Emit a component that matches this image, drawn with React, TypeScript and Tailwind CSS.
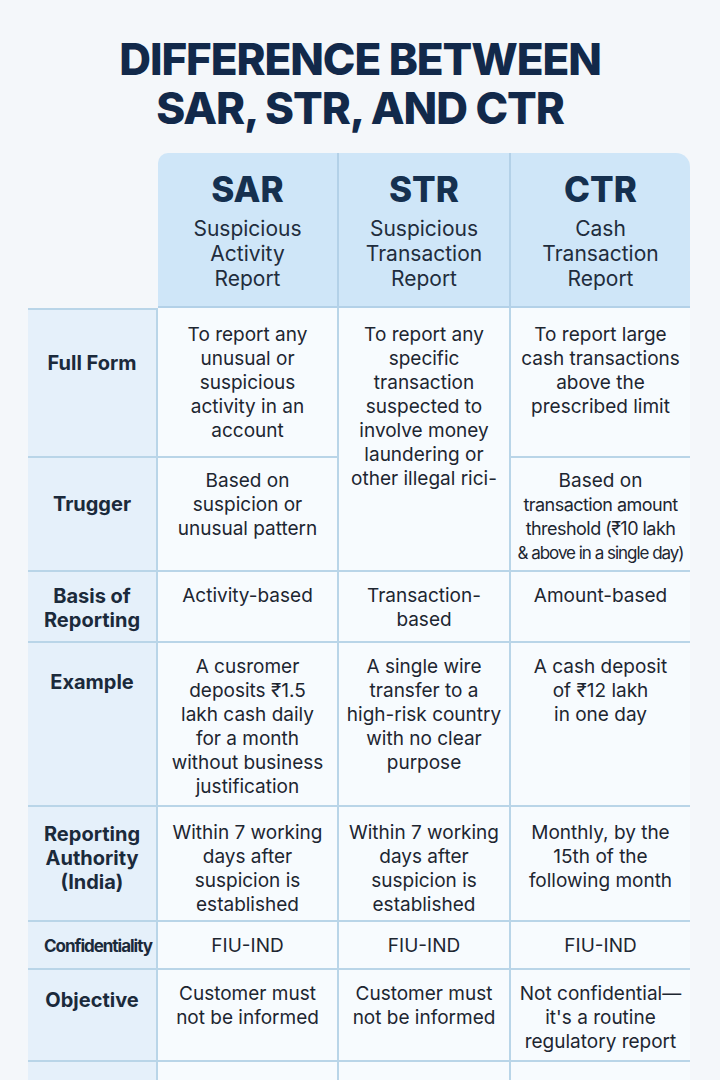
import React from "react"

type Row = {
  label: string[]
  labelPt: string
  pt: string
  sar: string[]
  str?: string[]
  ctr: React.ReactNode[]
}

const rows: Row[] = [
  {
    label: ["Full Form"],
    labelPt: "pt-[41px]",
    pt: "pt-[15px]",
    sar: ["To report any", "unusual or", "suspicious", "activity in an", "account"],
    str: [
      "To report any",
      "specific",
      "transaction",
      "suspected to",
      "involve money",
      "laundering or",
      "other illegal rici-",
    ],
    ctr: ["To report large", "cash transactions", "above the", "prescribed limit"],
  },
  {
    label: ["Trugger"],
    labelPt: "pt-[34px]",
    pt: "pt-[11px]",
    sar: ["Based on", "suspicion or", "unusual pattern"],
    ctr: [
      "Based on",
      <span className="text-[18px] tracking-[-0.03em]">transaction amount</span>,
      <span className="text-[18px] tracking-[-0.03em]">threshold (₹10 lakh</span>,
      <span className="text-[17px] tracking-[-0.06em]">&amp; above in a single day)</span>,
    ],
  },
  {
    label: ["Basis of", "Reporting"],
    labelPt: "pt-[12px]",
    pt: "pt-[12px]",
    sar: ["Activity-based"],
    str: ["Transaction-", "based"],
    ctr: ["Amount-based"],
  },
  {
    label: ["Example"],
    labelPt: "pt-[27px]",
    pt: "pt-[12px]",
    sar: [
      "A cusromer",
      "deposits ₹1.5",
      "lakh cash daily",
      "for a month",
      "without business",
      "justification",
    ],
    str: ["A single wire", "transfer to a", "high-risk country", "with no clear", "purpose"],
    ctr: ["A cash deposit", "of ₹12 lakh", "in one day"],
  },
  {
    label: ["Reporting", "Authority", "(India)"],
    labelPt: "pt-[15px]",
    pt: "pt-[14px]",
    sar: ["Within 7 working", "days after", "suspicion is", "established"],
    str: ["Within 7 working", "days after", "suspicion is", "established"],
    ctr: ["Monthly, by the", "15th of the", "following month"],
  },
  {
    label: ["Confidentiality"],
    labelPt: "pt-[12px]",
    pt: "pt-[12px]",
    sar: ["FIU-IND"],
    str: ["FIU-IND"],
    ctr: ["FIU-IND"],
  },
  {
    label: ["Objective"],
    labelPt: "pt-[18px]",
    pt: "pt-[12px]",
    sar: ["Customer must", "not be informed"],
    str: ["Customer must", "not be informed"],
    ctr: ["Not confidential—", "it's a routine", "regulatory report"],
  },
  {
    label: [""],
    labelPt: "",
    pt: "",
    sar: [],
    str: [],
    ctr: [],
  },
]

const heads = [
  { code: "SAR", name: ["Suspicious", "Activity", "Report"], cls: "rounded-tl-[10px] border-r-2" },
  { code: "STR", name: ["Suspicious", "Transaction", "Report"], cls: "border-r-2" },
  { code: "CTR", name: ["Cash", "Transaction", "Report"], cls: "rounded-tr-[14px]" },
]

function Lines({ items }: { items: React.ReactNode[] }) {
  return (
    <>
      {items.map((t, i) => (
        <div key={i} className="whitespace-nowrap">
          {t}
        </div>
      ))}
    </>
  )
}

export default function App() {
  return (
    <div
      className="w-[720px] h-[1080px] overflow-hidden bg-[#f4f7fa] text-[#1d2631]"
      style={{ fontFamily: "Inter, 'Noto Sans', Arial, sans-serif" }}
    >
      <h1 className="pt-[35px] text-center text-[44px] leading-[49px] font-extrabold tracking-[-0.025em] text-[#12294a]">
        DIFFERENCE BETWEEN
        <br />
        SAR, STR, AND CTR
      </h1>

      <div className="mt-[20px] ml-[28px] grid grid-cols-[130px_181px_172px_179px] grid-rows-[155px_150px_114px_71px_164px_115px_48px_92px_60px]">
        {/* header */}
        <div />
        {heads.map((h) => (
          <div
            key={h.code}
            className={`bg-[#cfe6f8] border-b-2 border-[#b3d1e8] text-center pt-[15px] ${h.cls}`}
          >
            <div className="text-[35px] leading-[42px] font-extrabold text-[#15304f]">{h.code}</div>
            <div className="mt-[6px] text-[21px] leading-[25px] text-[#1f2d3d]">
              <Lines items={h.name} />
            </div>
          </div>
        ))}

        {/* body */}
        {rows.map((r, ri) => (
          <React.Fragment key={ri}>
            <div
              className={`bg-[#e5f0fa] border-r-2 border-b-2 border-[#b9d5e8] ${ri === 0 ? "border-t-2" : ""} text-center font-bold leading-[24px] text-[#1b2a3b] ${r.labelPt} ${
                r.label[0] === "Confidentiality"
                  ? "text-[17px] tracking-[-0.06em] pl-[12px]"
                  : "text-[20px]"
              }`}
            >
              <Lines items={r.label} />
            </div>
            <div
              className={`bg-[#f7fbfe] border-r-2 border-b-2 border-[#b9d5e8] text-center text-[19px] leading-[24px] ${r.pt}`}
            >
              <Lines items={r.sar} />
            </div>
            {r.str && (
              <div
                className={`bg-[#f7fbfe] border-r-2 border-b-2 border-[#b9d5e8] text-center text-[19px] leading-[24px] ${r.pt} ${
                  ri === 0 ? "row-span-2" : ""
                }`}
              >
                <Lines items={r.str} />
              </div>
            )}
            <div
              className={`bg-[#f7fbfe] border-b-2 border-[#b9d5e8] text-center text-[19px] leading-[24px] ${r.pt}`}
            >
              <Lines items={r.ctr} />
            </div>
          </React.Fragment>
        ))}
      </div>
    </div>
  )
}
